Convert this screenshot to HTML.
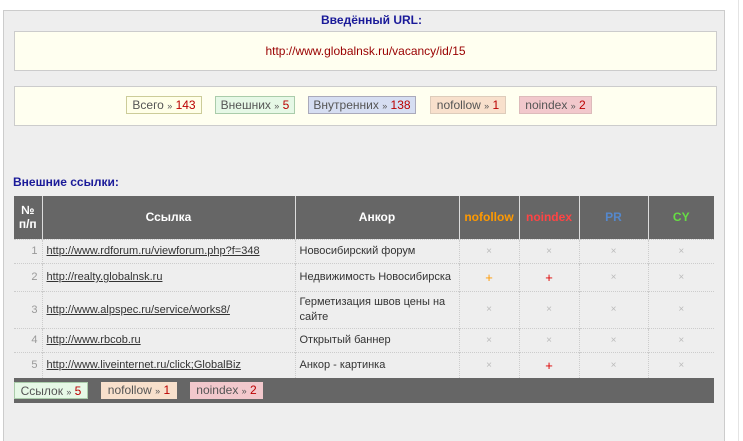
<!DOCTYPE html>
<html><head><meta charset="utf-8"><style>
*{margin:0;padding:0;box-sizing:border-box}
html,body{width:743px;height:441px;overflow:hidden}
body{background:#fff;font-family:"Liberation Sans",Arial,sans-serif;position:relative;font-size:11px;color:#333}
#panel{position:absolute;left:3px;top:10px;width:722px;height:440px;background:#eee;border:1px solid #ccc}
#rl{position:absolute;left:738px;top:0;width:1px;height:441px;background:#e4e4e4}
.abs{position:absolute}
.box{position:absolute;left:14px;width:703px;background:#fffff0;border:1px solid #ccc;text-align:center}
.b{position:absolute;top:96px;height:18px;line-height:16px;font-size:12px;border:1px solid;color:#555;text-align:center}
.b i{font-style:normal;color:#b00}
.b s{text-decoration:none;font-size:9px}
table{position:absolute;left:14px;top:196px;width:700px;border-collapse:collapse}
th{background:#666;color:#fff;font-weight:bold;font-size:12px;border-left:1px solid #ddd;height:43px}
th:first-child{border-left:none}
td{border-left:1px dotted #ccc;border-top:1px dotted #ccc;font-size:11px;padding:0 4px;vertical-align:middle}
td:first-child{border-left:none;text-align:right;color:#999}
td a{color:#333;text-decoration:underline}
td.c{text-align:center;color:#bbb;font-size:10px}
#foot{position:absolute;left:14px;top:378px;width:700px;height:25px;background:#666}
.f{position:absolute;top:4px;height:17px;line-height:16px;font-size:12px;color:#555;text-align:center}
.f i{font-style:normal;color:#b00}
.f s{text-decoration:none;font-size:9px}
</style></head><body>
<div id="panel"></div><div id="rl"></div>
<div class="abs" style="left:0;width:743px;top:13px;text-align:center;color:#1a1a99;font-weight:bold;font-size:12px">Введённый URL:</div>
<div class="box" style="top:31px;height:40px;line-height:38px;color:#900;font-size:12px">http://www.globalnsk.ru/vacancy/id/15</div>
<div class="box" style="top:86px;height:40px"></div>
<div class="b" style="left:126px;width:76px;background:#ffffe8;border-color:#cc9">Всего <s>»</s> <i>143</i></div>
<div class="b" style="left:215px;width:80px;background:#e6f8e6;border-color:#aca">Внешних <s>»</s> <i>5</i></div>
<div class="b" style="left:308px;width:108px;background:#d6def2;border-color:#aab">Внутренних <s>»</s> <i>138</i></div>
<div class="b" style="left:430px;width:76px;background:#f8e0cc;border-color:#dcb">nofollow <s>»</s> <i>1</i></div>
<div class="b" style="left:519px;width:73px;background:#f2c8cc;border-color:#dbb">noindex <s>»</s> <i>2</i></div>
<div class="abs" style="left:13px;top:175px;color:#1a1a99;font-weight:bold;font-size:12px">Внешние ссылки:</div>
<table>
<tr><th style="width:28px">№<br>п/п</th><th style="width:253px">Ссылка</th><th style="width:164px">Анкор</th><th style="width:60px;color:#f90">nofollow</th><th style="width:60px;color:#f44">noindex</th><th style="width:69px;color:#58c">PR</th><th style="color:#6d4">CY</th></tr>
<tr style="height:24px"><td>1</td><td><a>http://www.rdforum.ru/viewforum.php?f=348</a></td><td>Новосибирский форум</td><td class="c">×</td><td class="c">×</td><td class="c">×</td><td class="c">×</td></tr>
<tr style="height:28px"><td>2</td><td><a>http://realty.globalnsk.ru</a></td><td>Недвижимость Новосибирска</td><td class="c" style="color:#f90;font-size:13px">+</td><td class="c" style="color:#d00;font-size:13px">+</td><td class="c">×</td><td class="c">×</td></tr>
<tr style="height:37px"><td>3</td><td><a>http://www.alpspec.ru/service/works8/</a></td><td style="line-height:15px">Герметизация швов цены на сайте</td><td class="c">×</td><td class="c">×</td><td class="c">×</td><td class="c">×</td></tr>
<tr style="height:24px"><td>4</td><td><a>http://www.rbcob.ru</a></td><td>Открытый баннер</td><td class="c">×</td><td class="c">×</td><td class="c">×</td><td class="c">×</td></tr>
<tr style="height:26px"><td>5</td><td><a>http://www.liveinternet.ru/click;GlobalBiz</a></td><td>Анкор - картинка</td><td class="c">×</td><td class="c" style="color:#d00;font-size:13px">+</td><td class="c">×</td><td class="c">×</td></tr>
</table>
<div id="foot">
<div class="f" style="left:0;width:74px;background:#e6f8e6;border:1px solid #aca">Ссылок <s>»</s> <i>5</i></div>
<div class="f" style="left:87px;width:76px;background:#f8e0cc">nofollow <s>»</s> <i>1</i></div>
<div class="f" style="left:176px;width:73px;background:#f2c8cc">noindex <s>»</s> <i>2</i></div>
</div>
</body></html>
